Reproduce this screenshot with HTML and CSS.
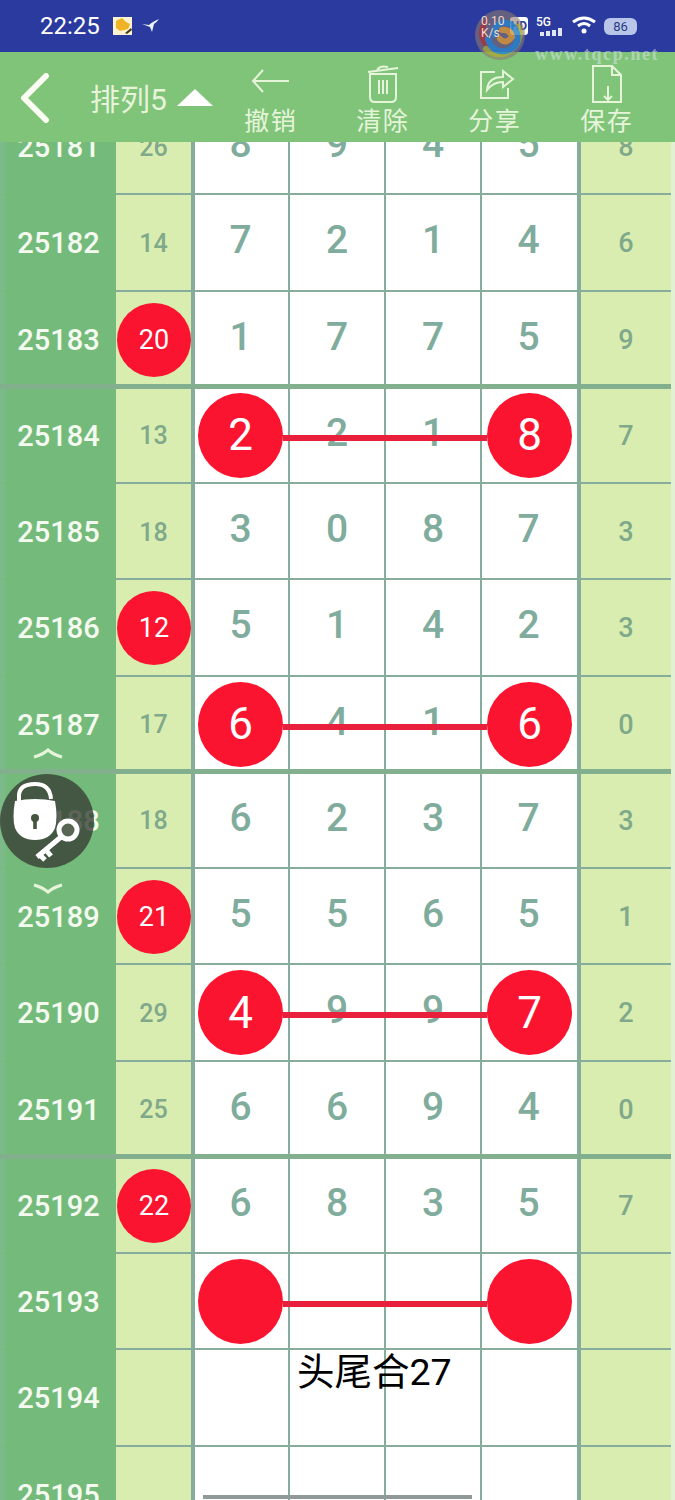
FILE: index.html
```html
<!DOCTYPE html>
<html>
<head>
    <meta charset="utf-8" />
    <title>排列5</title>
    <link rel="stylesheet" href="styles.css">
</head>
<body>
    <div class="screen">
        <div class="statusBar">
            <span class="clock">22:25</span>
            <svg class="noteIcon" width="20" height="20" viewBox="0 0 20 20">
                <rect x="0" y="1" width="19" height="18" fill="#fdf3d0"/>
                <path d="M3 5 L9 2 L13 6 L17 8 L15 13 L7 15 L3 12 Z" fill="#f0b325"/>
                <path d="M12 17 L18 12 L19 14 L14 18 Z" fill="#4a3a20"/>
            </svg>
            <svg class="birdIcon" width="18" height="14" viewBox="0 0 18 14">
                <path d="M0 5 L7 6 Q10 3 17 0 Q15 3 12 5 L10 13 L8 8 Z" fill="#eef2ff"/>
            </svg>
            <div class="statusRight">
                <span class="hdBadge">HD</span>
                <div class="fiveG">
                    <span>5G</span>
                    <svg width="25" height="8" viewBox="0 0 25 8">
                        <rect x="1" y="4" width="4" height="4" fill="#dfe6f5"/>
                        <rect x="7" y="3" width="4" height="5" fill="#dfe6f5"/>
                        <rect x="13" y="2" width="4" height="6" fill="#dfe6f5"/>
                        <rect x="19" y="0" width="4" height="8" fill="#dfe6f5"/>
                    </svg>
                </div>
                <svg width="24" height="20" viewBox="0 0 24 20">
                    <path d="M1 6 Q12 -2 23 6" class="wifiArc"/>
                    <path d="M6 10 Q12 5 18 10" class="wifiArc"/>
                    <circle cx="12" cy="15" r="2.5" fill="#fff"/>
                </svg>
                <span class="battery">86</span>
            </div>
        </div>

        <div class="toolbar">
            <svg class="backIcon" width="32" height="50" viewBox="0 0 32 50">
                <path d="M28 3 L6 25 L28 47" class="backStroke"/>
            </svg>
            <span class="title">排列5</span>
            <span class="triangle"></span>
            <div class="toolButton">
                <svg width="40" height="40" viewBox="0 0 40 40">
                    <path d="M38 17 H2 M12 6 L2 17 L12 28" class="toolStroke"/>
                </svg>
                <span>撤销</span>
            </div>
            <div class="toolButton">
                <svg width="40" height="40" viewBox="0 0 40 40">
                    <path d="M7 10 V33 Q7 38 12 38 H28 Q33 38 33 33 V10 Z M5 8 L35 4 M14 6 Q17 1 25 3 M16 16 V30 M20 16 V30 M24 16 V30" class="toolStroke"/>
                </svg>
                <span>清除</span>
            </div>
            <div class="toolButton">
                <svg width="40" height="40" viewBox="0 0 40 40">
                    <path d="M20 8 H6 V34 H33 V24 M12 26 Q13 13 28 13 V7 L38 15 L28 23 V18 Q18 18 12 26 Z" class="toolStroke"/>
                </svg>
                <span>分享</span>
            </div>
            <div class="toolButton">
                <svg width="40" height="40" viewBox="0 0 40 40">
                    <path d="M6 2 H25 L34 11 V38 H6 Z M25 2 V11 H34 M21 22 V36 M17 32 L21 36 L25 32" class="toolStroke"/>
                </svg>
                <span>保存</span>
            </div>
        </div>

        <div class="board">
            <div class="rows">
                <div class="row"><div class="num">25181</div><div class="sum">26</div><div class="digit">8</div><div class="digit">9</div><div class="digit">4</div><div class="digit last">5</div><div class="tail">8</div></div>
                <div class="row"><div class="num">25182</div><div class="sum">14</div><div class="digit">7</div><div class="digit">2</div><div class="digit">1</div><div class="digit last">4</div><div class="tail">6</div></div>
                <div class="row groupEnd"><div class="num">25183</div><div class="sum"><b class="smallBall">20</b></div><div class="digit">1</div><div class="digit">7</div><div class="digit">7</div><div class="digit last">5</div><div class="tail">9</div></div>

                <div class="row"><i class="link"></i><div class="num">25184</div><div class="sum">13</div><div class="digit"><b class="bigBall">2</b></div><div class="digit">2</div><div class="digit">1</div><div class="digit last"><b class="bigBall">8</b></div><div class="tail">7</div></div>
                <div class="row"><div class="num">25185</div><div class="sum">18</div><div class="digit">3</div><div class="digit">0</div><div class="digit">8</div><div class="digit last">7</div><div class="tail">3</div></div>
                <div class="row"><div class="num">25186</div><div class="sum"><b class="smallBall">12</b></div><div class="digit">5</div><div class="digit">1</div><div class="digit">4</div><div class="digit last">2</div><div class="tail">3</div></div>
                <div class="row groupEnd"><i class="link"></i><div class="num">25187</div><div class="sum">17</div><div class="digit"><b class="bigBall">6</b></div><div class="digit">4</div><div class="digit">1</div><div class="digit last"><b class="bigBall">6</b></div><div class="tail">0</div></div>

                <div class="row"><div class="num">25188</div><div class="sum">18</div><div class="digit">6</div><div class="digit">2</div><div class="digit">3</div><div class="digit last">7</div><div class="tail">3</div></div>
                <div class="row"><div class="num">25189</div><div class="sum"><b class="smallBall">21</b></div><div class="digit">5</div><div class="digit">5</div><div class="digit">6</div><div class="digit last">5</div><div class="tail">1</div></div>
                <div class="row"><i class="link"></i><div class="num">25190</div><div class="sum">29</div><div class="digit"><b class="bigBall">4</b></div><div class="digit">9</div><div class="digit">9</div><div class="digit last"><b class="bigBall">7</b></div><div class="tail">2</div></div>
                <div class="row groupEnd"><div class="num">25191</div><div class="sum">25</div><div class="digit">6</div><div class="digit">6</div><div class="digit">9</div><div class="digit last">4</div><div class="tail">0</div></div>

                <div class="row"><div class="num">25192</div><div class="sum"><b class="smallBall">22</b></div><div class="digit">6</div><div class="digit">8</div><div class="digit">3</div><div class="digit last">5</div><div class="tail">7</div></div>
                <div class="row"><i class="link"></i><div class="num">25193</div><div class="sum"></div><div class="digit"><b class="bigBall"></b></div><div class="digit"></div><div class="digit"></div><div class="digit last"><b class="bigBall"></b></div><div class="tail"></div></div>
                <div class="row"><div class="num">25194</div><div class="sum"></div><div class="digit"></div><div class="digit"></div><div class="digit"></div><div class="digit last"></div><div class="tail"></div></div>
                <div class="row"><div class="num">25195</div><div class="sum"></div><div class="digit"></div><div class="digit"></div><div class="digit"></div><div class="digit last"></div><div class="tail"></div></div>
            </div>
        </div>

        <!-- floating bits on top of the board -->
        <svg class="logoMark" width="52" height="52" viewBox="0 0 52 52">
            <circle cx="26" cy="26" r="25" fill="#8d7a70" opacity="0.7"/>
            <path d="M10 38 Q-2 20 14 8 Q8 24 16 36 Z" fill="#b23a3a"/>
            <path d="M12 40 Q28 52 42 36 Q48 26 44 18" class="logoArc logoGreen"/>
            <path d="M14 30 Q18 44 32 42 Q46 38 43 24 Q38 12 28 14 Q20 16 20 26" class="logoArc logoBlue"/>
            <path d="M26 30 Q32 36 38 28 Q36 20 28 21" class="logoArc logoOrange"/>
        </svg>
        <span class="speedOver">0.10<br>K/s</span>
        <span class="watermark">www.tqcp.net</span>

        <svg class="chevron chevronUp" width="30" height="12" viewBox="0 0 30 12">
            <path d="M1 10 Q9 8 15 3 Q21 8 29 10" class="chevronStroke"/>
        </svg>
        <div class="lockBadge">
            <svg width="94" height="94" viewBox="0 0 94 94">
                <path d="M19 28 V22 Q19 10 35 10 Q50 10 51 25" class="lockShackle"/>
                <path d="M15 27 Q35 23 55 27 Q58 44 55 54 Q50 66 35 66 Q20 66 15 54 Q12 44 15 27 Z" fill="#fff"/>
                <circle cx="35" cy="44" r="4" fill="#46553f"/>
                <rect x="33.2" y="44" width="3.6" height="11" fill="#46553f"/>
                <circle cx="68" cy="56" r="9" class="keyRing"/>
                <path d="M61 63 L37 83 M46 76 L51 82 M40 81 L45 86" class="keyStem"/>
            </svg>
        </div>
        <svg class="chevron chevronDown" width="30" height="12" viewBox="0 0 30 12">
            <path d="M1 2 Q9 4 15 9 Q21 4 29 2" class="chevronStroke"/>
        </svg>

        <div class="note">头尾合27</div>
        <div class="homeBar"></div>
    </div>
</body>
</html>
```

FILE: styles.css
```css
html, body {
    margin: 0;
    padding: 0;
}

.screen {
    position: relative;
    width: 675px;
    height: 1500px;
    overflow: hidden;
    font-family: Roboto, "Noto Sans CJK SC", sans-serif;
    background: #fff;
}

/* status bar */
.statusBar {
    display: flex;
    align-items: center;
    height: 52px;
    padding: 0 38px 0 40px;
    box-sizing: border-box;
    background: #2a3a9e;
    color: #fff;
}

.clock {
    font-size: 24px;
    width: 73px;
}

.birdIcon {
    margin-left: 9px;
}

.statusRight {
    display: flex;
    align-items: center;
    margin-left: auto;
    gap: 8px;
}

.hdBadge {
    width: 18px;
    padding: 3px 0;
    font-size: 12px;
    font-weight: 700;
    line-height: 12px;
    text-align: center;
    border-radius: 3px;
    color: #2a3a9e;
    background: #fff;
}

.fiveG {
    display: flex;
    flex-direction: column;
    width: 28px;
    font-size: 12px;
    font-weight: 500;
    line-height: 11px;
}

.fiveG svg {
    margin-left: 3px;
}

.wifiArc {
    fill: none;
    stroke: #fff;
    stroke-width: 3;
}

.battery {
    width: 33px;
    height: 17px;
    font-size: 13px;
    line-height: 17px;
    text-align: center;
    border-radius: 6px;
    color: #27407f;
    background: #b9c6ea;
}

/* toolbar */
.toolbar {
    position: relative;
    z-index: 2;
    display: flex;
    align-items: center;
    height: 90px;
    padding-left: 18px;
    box-sizing: border-box;
    background: #80c47a;
    color: #e6f5da;
}

.backIcon {
    margin-top: 2px;
}

.backStroke {
    fill: none;
    stroke: #fbfdf3;
    stroke-width: 6;
    stroke-linecap: round;
    stroke-linejoin: round;
}

.title {
    margin-left: 40px;
    font-size: 30px;
    white-space: nowrap;
}

.triangle {
    width: 0;
    height: 0;
    margin: 0 2px 0 10px;
    border-left: 18px solid transparent;
    border-right: 18px solid transparent;
    border-bottom: 17px solid #fff;
}

.toolButton {
    display: flex;
    flex-direction: column;
    align-items: center;
    width: 112px;
    padding-top: 4px;
    font-size: 25px;
    letter-spacing: 1.5px;
    line-height: 30px;
}

.toolButton svg {
    margin-top: 3px;
    margin-bottom: 3px;
}

.toolStroke {
    fill: none;
    stroke: #e6f5da;
    stroke-width: 2;
}

/* board */
.board {
    height: 1358px;
    overflow: hidden;
}

.rows {
    margin-top: -43px;
}

.row {
    position: relative;
    display: grid;
    grid-template-columns: 116px 79px 95px 96px 96px 99px 90px;
    height: 96.25px;
    box-sizing: border-box;
    background: #e2f1d4;
}

.row > div {
    display: flex;
    align-items: center;
    justify-content: center;
    box-sizing: border-box;
    border-bottom: 2px solid #86ad9b;
}

/* heavier rule every few rows */
.groupEnd::after {
    content: "";
    position: absolute;
    z-index: 2;
    left: 0;
    right: 4px;
    bottom: -1px;
    height: 5px;
    background: #82b08f;
}

.num {
    padding: 2px 4px 0 0;
    font-size: 29px;
    font-weight: 500;
    color: #f4faf0;
    background: #74bb7b;
    border-left: 5px solid #7dba8a;
}

.row > .num {
    border-bottom-color: #74bb7b;
}

.sum {
    padding-top: 2px;
    font-size: 25px;
    font-weight: 500;
    color: #7fa98a;
    background: #d9edb0;
    border-right: 4px solid #86ad9b;
}

.digit {
    position: relative;
    padding-bottom: 4px;
    font-size: 39px;
    font-weight: 500;
    color: #7fac9c;
    background: #fff;
    border-right: 2px solid #86ad9b;
}

.sum + .digit {
    padding-right: 2px;
}

.digit.last {
    padding-right: 2px;
    border-right-width: 4px;
}

.tail {
    padding-top: 2px;
    font-size: 27px;
    font-weight: 500;
    color: #7fa98a;
    background: #d9edb0;
}

.smallBall, .bigBall {
    position: relative;
    z-index: 1;
    display: flex;
    align-items: center;
    justify-content: center;
    flex: none;
    font-weight: 400;
    color: #fff;
    border-radius: 50%;
    background: #fb1430;
}

.smallBall {
    width: 74px;
    height: 74px;
    margin: 0 0 0 1px;
    font-size: 27px;
}

.bigBall {
    width: 85px;
    height: 85px;
    margin: 5px 0 0 0;
    font-size: 44px;
}

.digit.last .bigBall {
    margin-left: 2px;
}

/* the red bar joining head and tail of a row */
.link {
    position: absolute;
    z-index: 1;
    left: 283px;
    top: 47px;
    width: 204px;
    height: 6px;
    background: #e8203c;
}

/* overlays */
.logoMark {
    position: absolute;
    z-index: 3;
    left: 474px;
    top: 9px;
    opacity: 0.85;
}

.logoArc {
    fill: none;
    stroke-width: 6;
    stroke-linecap: round;
}

.logoGreen {
    stroke: #a9a83a;
}

.logoBlue {
    stroke: #2f86c9;
}

.logoOrange {
    stroke: #d99a35;
}

.speedOver {
    position: absolute;
    z-index: 4;
    left: 481px;
    top: 15px;
    font-size: 12px;
    line-height: 12px;
    color: #f0d8c8;
}

.watermark {
    position: absolute;
    z-index: 3;
    left: 535px;
    top: 44px;
    font-family: "Liberation Serif", serif;
    font-size: 18px;
    font-weight: 700;
    letter-spacing: 1.6px;
    color: rgba(215, 228, 225, 0.55);
}

.chevron {
    position: absolute;
    z-index: 3;
    left: 33px;
}

.chevronUp {
    top: 747px;
}

.chevronDown {
    top: 883px;
}

.chevronStroke {
    fill: none;
    stroke: #e6f5da;
    stroke-width: 3;
}

.lockBadge {
    position: absolute;
    z-index: 3;
    left: 0;
    top: 774px;
    width: 94px;
    height: 94px;
    border-radius: 50%;
    background: rgba(56, 63, 53, 0.8);
}

.lockShackle {
    fill: none;
    stroke: #fff;
    stroke-width: 4;
}

.keyRing {
    fill: #5a6654;
    stroke: #fff;
    stroke-width: 5;
}

.keyStem {
    fill: none;
    stroke: #fff;
    stroke-width: 5;
}

.note {
    position: absolute;
    z-index: 3;
    left: 297px;
    top: 1346px;
    font-size: 37.5px;
    line-height: 52px;
    color: #000;
}

.homeBar {
    position: absolute;
    z-index: 3;
    left: 203px;
    top: 1495px;
    width: 269px;
    height: 4px;
    background: #8f9a98;
}
```
